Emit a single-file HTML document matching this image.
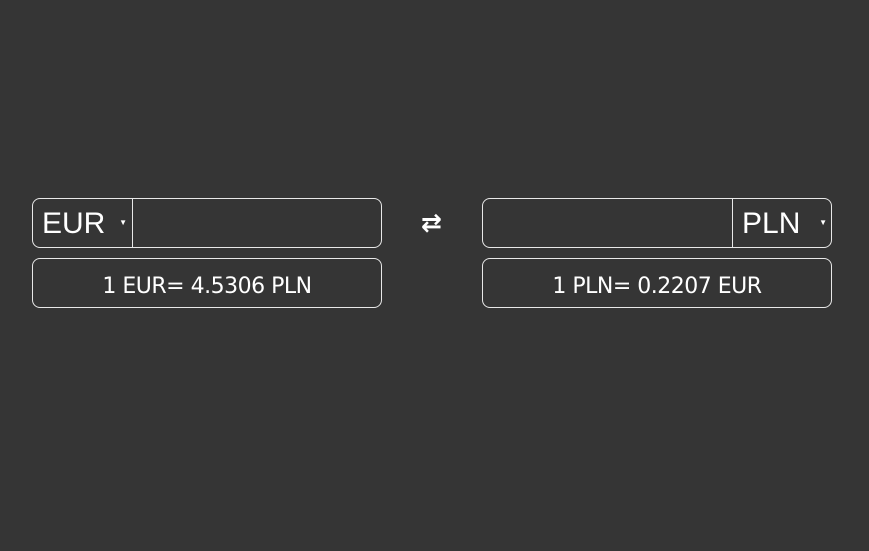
<!DOCTYPE html>
<html><head><style>
body{margin:0;width:869px;height:551px;background:#353535;font-family:"Liberation Sans",sans-serif;color:#fff;position:relative;overflow:hidden}
.b{position:absolute;box-sizing:border-box;border:1px solid #e8e8e8;border-radius:8px;height:50px;width:350px}
.sel{position:absolute;top:0;height:48px;width:100px;box-sizing:border-box;font-size:30px;line-height:50px;padding-left:9px}
.sel span{position:absolute;right:5px;top:0;font-size:8px;line-height:48px}
.rate{text-align:center;line-height:56px;font-family:"DejaVu Sans","Liberation Sans",sans-serif;font-size:22px;letter-spacing:-0.5px}
</style></head><body>
<div class="b" style="left:32px;top:198px"><div class="sel" style="left:0;border-right:1px solid #e8e8e8">EUR<span>▼</span></div></div>
<div class="b rate" style="left:32px;top:258px">1 EUR= 4.5306 PLN</div>
<div style="position:absolute;left:421px;top:209px;font-size:25px;line-height:28px;font-weight:bold;font-family:'DejaVu Sans',sans-serif">⇄</div>
<div class="b" style="left:482px;top:198px"><div class="sel" style="left:249px;border-left:1px solid #e8e8e8">PLN<span>▼</span></div></div>
<div class="b rate" style="left:482px;top:258px">1 PLN= 0.2207 EUR</div>
</body></html>
